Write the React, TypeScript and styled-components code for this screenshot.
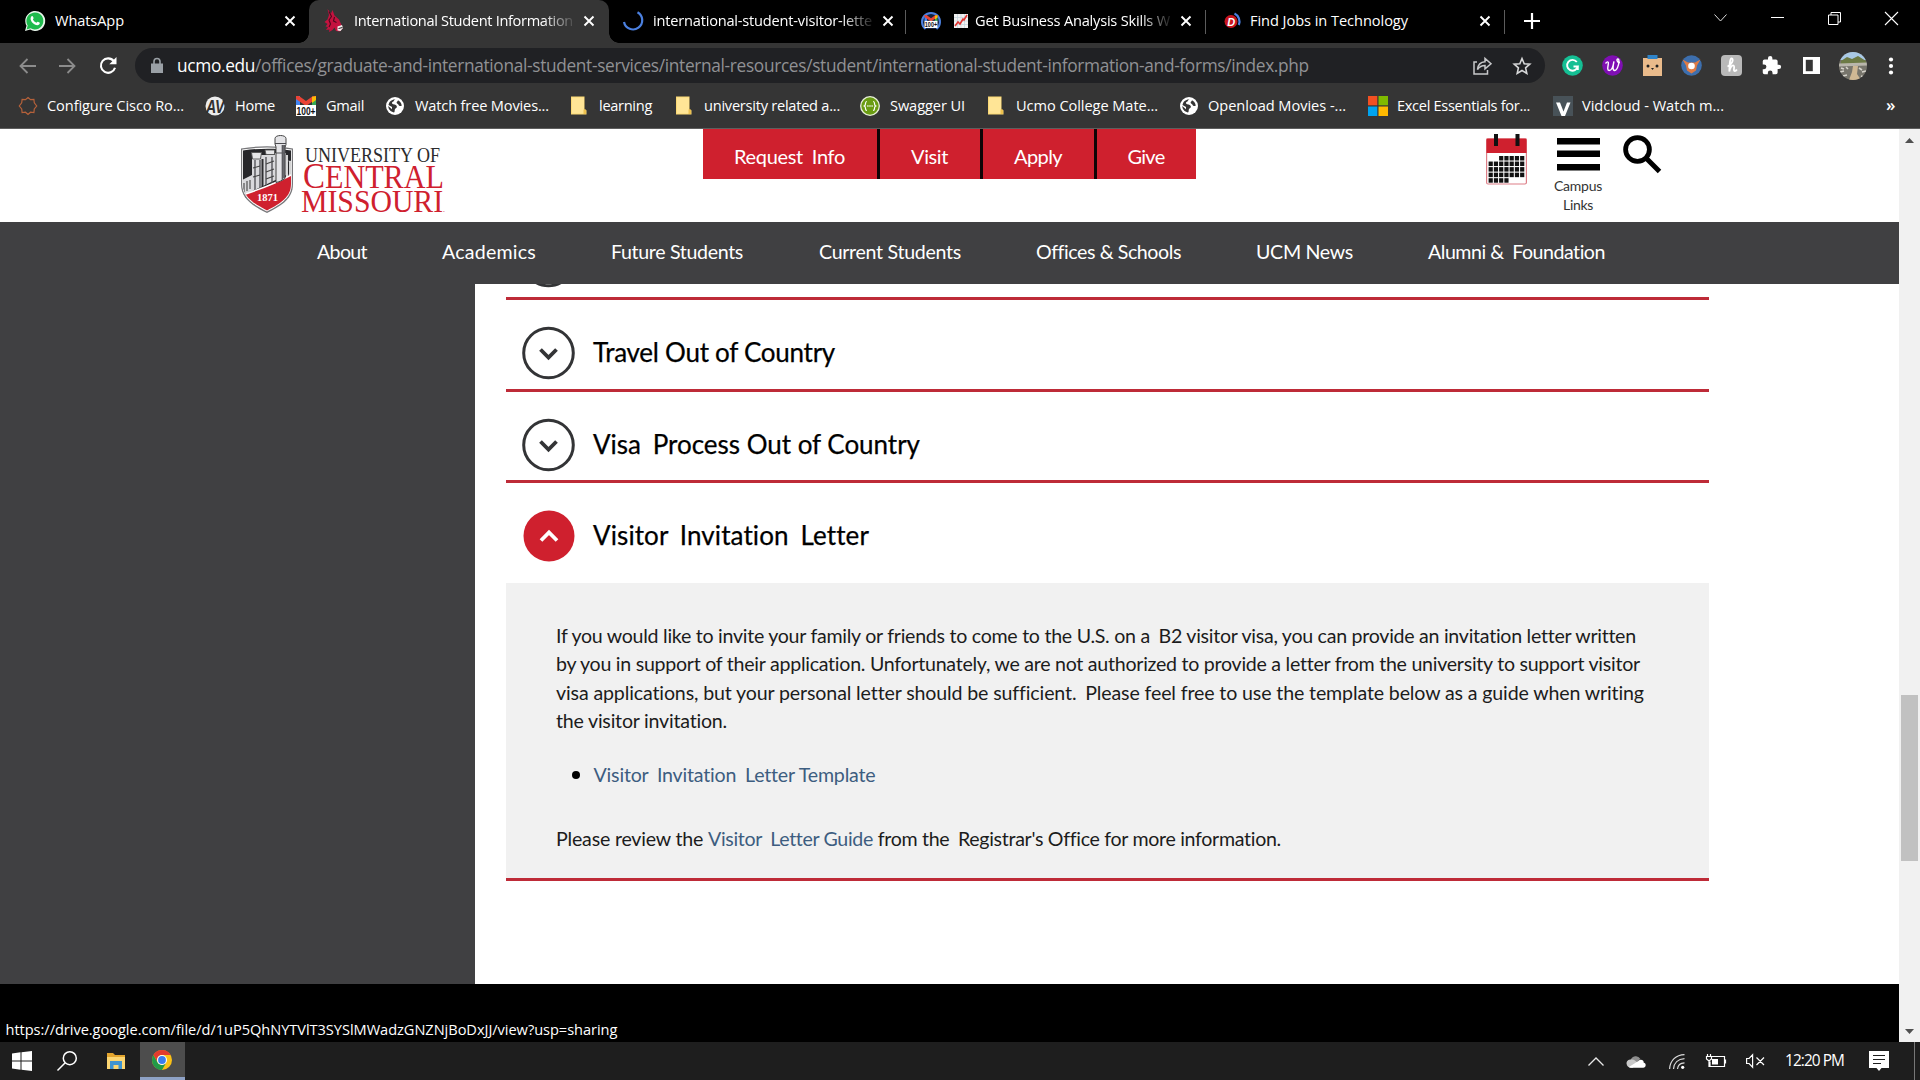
import React, { useLayoutEffect, useRef, useState } from "react";
import styled, { createGlobalStyle } from "styled-components";

const UI = `"Open Sans", "Noto Sans", sans-serif`;
const SITE = `Lato, "Open Sans", sans-serif`;
const RED = "#cf202e";

const Global = createGlobalStyle`
  * { box-sizing: border-box; }
  body { margin: 0; background: #000; overflow: hidden; }
  svg { display: block; flex: none; overflow: visible; }
`;

/* ---------- text tracked out to a fixed measure ---------- */
const Tracked = styled.span`
  display: inline-block;
  flex: none;
  white-space: pre;
`;
const WideSpace = styled.span`
  padding-right: 0.2em;
`;

/* A "~" in the text stands for a word space that is set wider than the rest. */
function Fit({ w, children }: { w: number; children: React.ReactNode }) {
  const ref = useRef<HTMLSpanElement>(null);
  const [spacing, setSpacing] = useState(0.001);
  useLayoutEffect(() => {
    const el = ref.current;
    if (!el) return;
    el.style.letterSpacing = "0.001px";
    const natural = el.getBoundingClientRect().width;
    const next = (w - natural) / (el.textContent || " ").length;
    el.style.letterSpacing = `${next}px`;
    setSpacing(next);
  }, [w]);
  const content =
    typeof children === "string"
      ? children.split("~").map((part, i) => (
          <React.Fragment key={i}>
            {i > 0 && <WideSpace> </WideSpace>}
            {part}
          </React.Fragment>
        ))
      : children;
  return (
    <Tracked ref={ref} style={{ letterSpacing: `${spacing}px` }}>
      {content}
    </Tracked>
  );
}

/* ---------- window ---------- */
const Screen = styled.div`
  width: 1920px;
  height: 1080px;
  display: flex;
  flex-direction: column;
  overflow: hidden;
  font-family: ${UI};
  color: #fff;
`;

const TabStrip = styled.div`
  height: 43px;
  flex: none;
  display: flex;
  background: #000;
`;
const Tab = styled.div<{ $w: number; $active?: boolean; $pad: number; $line?: boolean }>`
  position: relative;
  width: ${(p) => p.$w}px;
  height: 43px;
  padding: 0 0 1px ${(p) => p.$pad}px;
  display: flex;
  align-items: center;
  font-size: 14.6px;
  line-height: 20px;
  background: ${(p) => (p.$active ? "#353535" : "transparent")};
  border-radius: ${(p) => (p.$active ? "10px 10px 0 0" : "0")};
  &::after {
    content: "";
    position: absolute;
    right: 0;
    top: 10px;
    width: 1px;
    height: 24px;
    background: ${(p) => (p.$line ? "#5c5c5c" : "transparent")};
  }
`;
const Foot = styled.i<{ $side: "left" | "right" }>`
  position: absolute;
  bottom: 0;
  ${(p) => p.$side}: -10px;
  width: 10px;
  height: 10px;
  background: radial-gradient(
    circle at ${(p) => (p.$side === "left" ? "0 0" : "100% 0")},
    transparent 9.5px,
    #353535 10px
  );
`;
const TabIcon = styled.div<{ $w: number }>`
  width: ${(p) => p.$w}px;
  flex: none;
  display: flex;
  align-items: center;
`;
const TabTitle = styled.div<{ $w: number; $fade?: boolean }>`
  width: ${(p) => p.$w}px;
  flex: none;
  overflow: hidden;
  height: 22px;
  ${(p) => p.$fade && `mask-image: linear-gradient(90deg, #000 ${p.$w - 40}px, transparent ${p.$w - 6}px);`}
`;
const WindowControls = styled.div`
  margin-left: auto;
  display: flex;
  height: 36px;
  align-items: center;
  & > div { width: 57px; display: flex; justify-content: center; }
`;

const Toolbar = styled.div`
  height: 45px;
  flex: none;
  display: flex;
  align-items: center;
  background: #353535;
  padding-left: 19px;
`;
const NavSlot = styled.div<{ $w: number }>`
  width: ${(p) => p.$w}px;
  flex: none;
`;
const Address = styled.div`
  width: 1410px;
  height: 35px;
  flex: none;
  border-radius: 18px;
  background: #202124;
  display: flex;
  align-items: center;
  padding-left: 16px;
  font-size: 17.3px;
  line-height: 24px;
  color: #909194;
  & b { font-weight: 400; color: #fff; }
`;
const AddressText = styled.div`
  width: 1296px;
  margin-left: 14px;
  flex: none;
`;
const Extensions = styled.div`
  display: flex;
  align-items: center;
  padding-left: 17px;
  & > * { margin-right: 18.8px; }
  & > *:nth-last-child(2) { margin-left: -2px; }
`;

const Bookmarks = styled.div`
  height: 41px;
  flex: none;
  display: flex;
  align-items: center;
  background: #353535;
  border-bottom: 1px solid #5e5e5e;
  padding: 0 0 5px 18px;
  font-size: 14.6px;
  line-height: 20px;
`;
const Bookmark = styled.div<{ $w: number }>`
  width: ${(p) => p.$w}px;
  flex: none;
  display: flex;
  align-items: center;
`;
const BookmarkIcon = styled.div<{ $w: number }>`
  width: ${(p) => p.$w}px;
  flex: none;
`;
const BookmarkText = styled.div`
  padding-bottom: 1px;
`;
const More = styled.div`
  margin-left: auto;
  width: 34px;
  padding-bottom: 2px;
  font-size: 17px;
  font-weight: 600;
`;

/* ---------- site ---------- */
const Viewport = styled.div`
  height: 913px;
  flex: none;
  display: flex;
`;
const Page = styled.div`
  position: relative;
  width: 1899px;
  display: flex;
  flex-direction: column;
  background: #000;
  font-family: ${SITE};
`;
const SiteHeader = styled.header`
  height: 93px;
  flex: none;
  display: flex;
  align-items: flex-start;
  background: #fff;
  padding-left: 241px;
`;
const LogoBox = styled.div`
  width: 462px;
  padding-top: 6px;
`;
const Actions = styled.div`
  display: flex;
  width: 783px;
  gap: 3px;
  & > div { box-shadow: 3px 0 0 #100406; }
  & > div:last-child { box-shadow: none; }
`;
const Action = styled.div<{ $w: number }>`
  width: ${(p) => p.$w}px;
  height: 50px;
  background: ${RED};
  display: flex;
  justify-content: center;
  padding: 13px 1px 0 0;
  font-size: 20px;
  line-height: 28px;
`;
const CalendarBox = styled.div`
  width: 62px;
  padding-top: 5px;
`;
const Campus = styled.div`
  width: 60px;
  padding-top: 9px;
  display: flex;
  flex-direction: column;
  align-items: center;
  color: #333;
  font-size: 14px;
  line-height: 19px;
  svg { margin-bottom: 5px; }
`;
const SearchBox = styled.div`
  padding: 6px 0 0 15px;
`;
const SiteNav = styled.nav`
  height: 62px;
  flex: none;
  display: flex;
  background: #404042;
  padding: 16px 0 0 317px;
  font-size: 19.6px;
  line-height: 28px;
`;
const NavItem = styled.div<{ $w: number }>`
  width: ${(p) => p.$w}px;
  flex: none;
`;
const Body = styled.div`
  height: 700px;
  flex: none;
  display: flex;
  background: #404042;
`;
const Side = styled.aside`
  width: 475px;
  flex: none;
`;
const Main = styled.main`
  flex: 1;
  background: #fff;
  padding: 0 190px 0 31px;
  overflow: hidden;
`;
const Row = styled.div<{ $h: number; $below?: number; $open?: boolean }>`
  height: ${(p) => p.$h}px;
  display: flex;
  align-items: flex-end;
  padding: 0 0 ${(p) => p.$below ?? 10}px 16px;
  border-bottom: ${(p) => (p.$open ? "0" : "3px solid #be2b38")};
  color: #000;
  font-size: 26px;
  line-height: 52px;
  -webkit-text-stroke: 0.25px #000;
`;
const Title = styled.div`
  padding-bottom: 1px;
`;
const Chevron = styled.div`
  width: 71px;
  flex: none;
`;
const Panel = styled.section`
  height: 298px;
  background: #f1f1f1;
  border-bottom: 3px solid #be2b38;
  padding: 39px 0 0 50px;
  color: #1c1c1c;
  font-size: 19.6px;
  line-height: 28.4px;
`;
const Line = styled.div`
  height: 28.4px;
`;
const Item = styled.div`
  display: flex;
  align-items: center;
  margin: 25.5px 0 36px;
  padding-left: 16px;
`;
const Bullet = styled.i`
  width: 8px;
  height: 8px;
  border-radius: 50%;
  background: #000;
  margin-right: 13.5px;
`;
const Link = styled.a`
  color: #3d5d80;
`;
const Status = styled.div`
  position: absolute;
  left: 5.5px;
  bottom: 2px;
  font-family: ${UI};
  font-size: 14.6px;
  line-height: 22px;
`;
const Scrollbar = styled.div`
  width: 21px;
  background: #f1f1f1;
  display: flex;
  flex-direction: column;
  align-items: center;
  padding-top: 9px;
`;
const Thumb = styled.div`
  width: 17px;
  height: 166px;
  margin: 552px 0 168px;
  background: #c1c1c1;
`;

/* ---------- taskbar ---------- */
const Taskbar = styled.div`
  height: 38px;
  flex: none;
  display: flex;
  background: #1e1e1e;
`;
const Slot = styled.div<{ $w: number; $pad?: number; $on?: boolean }>`
  width: ${(p) => p.$w}px;
  padding-left: ${(p) => p.$pad || 0}px;
  height: 38px;
  flex: none;
  display: flex;
  align-items: center;
  font-size: 15.4px;
  line-height: 20px;
  background: ${(p) => (p.$on ? "#4d4d4d" : "transparent")};
  border-bottom: ${(p) => (p.$on ? "3px solid #8ea2c6" : "0")};
`;
const Tray = styled.div`
  margin-left: auto;
  width: 332px;
  display: flex;
`;

/* ---------- drawings ---------- */
const Close = () => (
  <svg width="12" height="12" viewBox="0 0 12 12" stroke="#fff" strokeWidth="1.9">
    <path d="M1.5 1.5l9 9M10.5 1.5l-9 9" />
  </svg>
);
const WhatsApp = () => (
  <svg width="20" height="20" viewBox="0 0 20 20">
    <path d="M0 20l1.5-5.2A10 10 0 1 1 5.2 18.6z" fill="#e9f7ec" />
    <path d="M1.6 18.4l1.1-3.9a8.5 8.5 0 1 1 2.9 2.8z" fill="#1fbb4d" />
    <path d="M6.6 5.3c.5-.5 1-.4 1.3.2l.7 1.6c.1.6-.7 1-.7 1.5.8 1.5 1.9 2.5 3.4 3.1.5.1.9-1.2 1.5-1l1.7.9c.6.4.2 1.5-.4 2-2 1.4-4.9-.2-6.4-1.7C6 10.2 4.6 7.3 6.6 5.3z" fill="#fff" />
  </svg>
);
const Mule = () => (
  <svg width="20" height="24" viewBox="0 0 20 24">
    <path d="M3.5 0l3.500 4.500L8.500 1l2 5.500 4.500 4 2.500 5.500 1 3.500-2.500 3-4-.5-1.500-3.500-2 2.500-3.500 2 .5-2.500-3.500.5 2-3-2.500-.5 2-2.500L.5 13l3-2.500L5 6z" fill="#c4123f" />
    <path d="M5 2.500l2.500 5L5 11l1.500 4-1.500 3M10.500 8l-1 4 3 1.500" stroke="#4a0a1c" strokeWidth="1.1" fill="none" />
    <path d="M13.500 17.500l4.500-1.500 1 3-2.500 3-3-.5z" fill="#f5eeee" />
    <path d="M14.500 19.500l4-1" stroke="#222" />
  </svg>
);
const Spinner = () => (
  <svg width="20" height="20" viewBox="0 0 20 20" fill="none" stroke="#4b80e0" strokeWidth="2.2">
    <path d="M14.5 1.200A9.200 9.200 0 1 1 1 11" />
  </svg>
);
const HundredMail = ({ ring }: { ring?: boolean }) => (
  <svg width="20" height="20" viewBox="0 0 20 20">
    {ring && <path d="M4.500 18A9 9 0 1 1 15.500 18" fill="#14213c" stroke="#4b80e0" strokeWidth="2" />}
    <g transform={ring ? "translate(3.500 4) scale(.65)" : undefined}>
      <path d="M0 0h4v10H0z" fill="#4285f4" />
      <path d="M16 0h4v10h-4z" fill="#34a853" />
      <path d="M0 0h3l7 5 7-5h3v3L10 10 0 3z" fill="#ea4335" />
      <path d="M16 1l4-1v4l-4 3z" fill="#fbbc04" />
      <path d="M0 9h20v11H0z" fill="#fff" />
      <text x="0.5" y="18.8" fontSize="11" fontWeight="700" fontFamily="Liberation Sans" textLength="19" lengthAdjust="spacingAndGlyphs" fill="#111">100+</text>
    </g>
  </svg>
);
const ChartMark = () => (
  <svg width="14" height="14" viewBox="0 0 14 14">
    <path d="M0 0h14v14H0z" fill="#f2f2f2" />
    <path d="M0 3.500h14M0 7h14M0 10.500h14M3.500 0v14M7 0v14M10.500 0v14" stroke="#c3d2dc" strokeWidth=".7" />
    <path d="M1 12l3-4 2 2 3-5 1 1 3-5" fill="none" stroke="#e0322f" strokeWidth="1.6" />
  </svg>
);
const Dice = () => (
  <svg width="18" height="20" viewBox="0 0 18 20">
    <circle cx="7" cy="10.5" r="6.5" fill="#c8141d" />
    <text x="3.2" y="14.5" fontSize="11" fontWeight="900" fontStyle="italic" fontFamily="Liberation Sans" fill="#fff">D</text>
    <path d="M10.500 2.500A9 9 0 0 1 14.800 14" fill="none" stroke="#4b80e0" strokeWidth="2.2" />
  </svg>
);
const Folder = () => (
  <svg width="16" height="19" viewBox="0 0 16 19">
    <path d="M0 .5h13.500v13l2 .8v4.200H0z" fill="#fbd975" />
    <path d="M1 1.500h12v16H1z" fill="#ffe596" />
    <path d="M12.500 13.500h2.500v4.500h-2.500z" fill="#edc14f" />
  </svg>
);
const Globe = () => (
  <svg width="18" height="18" viewBox="0 0 18 18">
    <circle cx="9" cy="9" r="9" fill="#fff" />
    <path d="M9.500 2.500c-2 .5-1.200 2-3 2.500-1 .6-.5 2 .6 2.200 2 .2 3.900.7 3.800 2.500 0 1.500-2.200 1.500-2.200 3.200 0 1.300-.2 2.500-.8 2.600C4.500 14.700 2.200 12 2.300 9l3.700 3.300V10L2.500 8C3 4.500 6 2.100 9.500 2.500zM12 3.200c2.200 1.200 3.600 3.200 3.700 5.500-1 .8-2.900.300-3.200-.9-.2-.9-1.900-.8-1.900-2.300 0-.9 1.200-1 1.400-2.300z" fill="#353535" />
  </svg>
);
const Sun = () => (
  <svg width="20" height="20" viewBox="0 0 20 20" fill="none" stroke="#b5613a" strokeWidth="1.2">
    <path d="M10 1.500l2.500 2.200 3.400-.3.400 3.400L18.700 10l-2.400 3 -.4 3.500-3.400-.3L10 18.500l-2.500-2.300-3.400.3-.4-3.500L1.300 10l2.400-3.200.4-3.400 3.400.3z" />
  </svg>
);
const AV = () => (
  <svg width="20" height="20" viewBox="0 0 20 20">
    <circle cx="10" cy="10" r="9.5" fill="#ececec" />
    <text x="1" y="17" fontSize="18" fontWeight="700" fontStyle="italic" fontFamily="Liberation Sans" textLength="18.5" lengthAdjust="spacingAndGlyphs" fill="#303030">AV</text>
  </svg>
);
const Swagger = () => (
  <svg width="20" height="20" viewBox="0 0 20 20">
    <circle cx="10" cy="10" r="9.3" fill="#6a9c12" stroke="#e8f0d8" strokeWidth="1.3" />
    <path d="M7 5.500c-1.500 0-1.500.8-1.500 2s0 2-1.200 2.500C5.500 10.500 5.500 11.500 5.500 12.500s0 2 1.500 2M13 5.500c1.500 0 1.500.8 1.500 2s0 2 1.200 2.500c-1.200.5-1.200 1.500-1.200 2.500s0 2-1.500 2" fill="none" stroke="#fff" strokeWidth="1.2" />
    <path d="M7.300 10h1.200M9.400 10h1.200M11.500 10h1.200" stroke="#fff" strokeWidth="1.3" />
  </svg>
);
const Squares = () => (
  <svg width="20" height="20" viewBox="0 0 20 20">
    <path d="M0 0h9.300v9.300H0z" fill="#f25022" />
    <path d="M10.500 0H20v9.300h-9.500z" fill="#7fba00" />
    <path d="M0 10.500h9.300V20H0z" fill="#00a4ef" />
    <path d="M10.500 10.500H20V20h-9.500z" fill="#ffb900" />
  </svg>
);
const Vid = () => (
  <svg width="20" height="20" viewBox="0 0 20 20">
    <path d="M0 0h20v20H0z" fill="#485258" />
    <path d="M3 6.500h4l3.500 9L14 6.500h3.500L12 20H8.500z" fill="#fff" />
  </svg>
);
const Arrow = ({ flip }: { flip?: boolean }) => (
  <svg width="17" height="16" viewBox="0 0 17 16" fill="none" stroke="#8c8c8c" strokeWidth="1.8">
    <path d={flip ? "M0 8h15.500M8.500 1l7 7-7 7" : "M17 8H1.500M8.500 1l-7 7 7 7"} />
  </svg>
);
const Reload = () => (
  <svg width="18" height="18" viewBox="0 0 18 18" fill="none" stroke="#fff" strokeWidth="2.1">
    <path d="M14.800 4.200A7.200 7.200 0 1 0 16 10.700" />
    <path d="M17.500 0v7.200h-7.200z" fill="#fff" stroke="none" />
  </svg>
);
const Lock = () => (
  <svg width="12" height="15" viewBox="0 0 12 15">
    <path d="M0 5.500h12V15H0z" fill="#9aa0a6" />
    <path d="M3 6V3.500a3 3 0 0 1 6 0V6" fill="none" stroke="#9aa0a6" strokeWidth="1.6" />
  </svg>
);
const Share = () => (
  <svg width="19" height="18" viewBox="0 0 19 18" fill="none" stroke="#c6c7c9" strokeWidth="1.5">
    <path d="M4 5H1v12h13.500v-4" />
    <path d="M4.500 12.500C5 7.500 8 5 12 4.800V1.500l6 5.300-6 5V8.500c-3.500 0-5.500 1-7.500 4z" />
  </svg>
);
const Star = () => (
  <svg width="18" height="18" viewBox="0 0 18 18" fill="none" stroke="#d6d7d8" strokeWidth="1.6">
    <path d="M9 1.500l2.200 5.200 5.600.5-4.200 3.700 1.200 5.500L9 13.500l-4.800 2.900 1.200-5.500L1.200 7.200l5.600-.5z" />
  </svg>
);

const ExtensionIcons = () => (
  <Extensions>
    <svg width="21" height="21" viewBox="0 0 21 21">
      <circle cx="10.5" cy="10.5" r="10.3" fill="#15bf94" />
      <path d="M14.800 7A5.400 5.400 0 1 0 15.800 11.500H11.500M15.800 11v4" fill="none" stroke="#fff" strokeWidth="1.9" />
    </svg>
    <svg width="21" height="21" viewBox="0 0 21 21">
      <circle cx="10.5" cy="10.5" r="10.3" fill="#7f0fb3" />
      <path d="M3.500 8.500c2-2.500 3.300-2 2.800.5-.5 3-1.300 6.500.8 6.500 2.400 0 4.200-5 4.800-9-.8 4-1.700 9 .8 9 3 0 5.800-11 3.300-11.500-1.800-.3-1.200 4 2 3.500" fill="none" stroke="#fff" strokeWidth="1.4" />
    </svg>
    <svg width="21" height="21" viewBox="0 0 21 21">
      <path d="M1 3h19v18H1z" fill="#eabb8b" />
      <path d="M5.500 0h10v4h-10z" fill="#2f84c9" />
      <circle cx="6" cy="11" r="1.5" fill="#222" />
      <circle cx="15" cy="11" r="1.5" fill="#222" />
      <path d="M9 13h3l-1.500 2z" fill="#222" />
    </svg>
    <svg width="21" height="21" viewBox="0 0 21 21">
      <circle cx="10.5" cy="10.5" r="10.3" fill="#3d6fae" />
      <path d="M1.500 4.500l5.500 3h7l5.500-3-3.500 6-1 5-4.500 3-4.500-3-1-5z" fill="#df7b45" />
      <circle cx="10.5" cy="11" r="3.3" fill="#fff" />
    </svg>
    <svg width="21" height="21" viewBox="0 0 21 21">
      <rect width="21" height="21" rx="4" fill="#b9b9b9" />
      <path d="M6.500 11.500c4.500-1.500 6.500-7.500 4.300-8-2.300-.5-2.300 9-2.500 13 .7-4 2.700-6.500 4.200-6 1.800.6-.8 5.500 1.200 5.500 1 0 1.700-.7 2.200-1.500" fill="none" stroke="#fff" strokeWidth="1.8" />
    </svg>
    <svg width="21" height="21" viewBox="0 0 24 24">
      <path d="M20.500 11H19V7a2 2 0 0 0-2-2h-4V3.500a2.500 2.500 0 0 0-5 0V5H4a2 2 0 0 0-2 2v3.800h1.500a2.700 2.700 0 0 1 0 5.400H2V20a2 2 0 0 0 2 2h3.800v-1.500a2.700 2.700 0 0 1 5.400 0V22H17a2 2 0 0 0 2-2v-4h1.500a2.500 2.500 0 0 0 0-5z" fill="#fff" />
    </svg>
    <svg width="21" height="19" viewBox="0 0 21 19">
      <path d="M2 1h17v17H2z" fill="#fff" />
      <path d="M4.800 3.800h7v11.400h-7z" fill="#353535" />
    </svg>
    <svg width="28" height="28" viewBox="0 0 28 28">
      <defs>
        <clipPath id="face"><circle cx="14" cy="14" r="14" /></clipPath>
      </defs>
      <g clipPath="url(#face)">
        <path d="M0 0h28v28H0z" fill="#77756c" />
        <path d="M0 0h28v8H0z" fill="#a9c9e6" />
        <path d="M2 9l6-4 5 2 6-3 8 5v3H2z" fill="#6c7a45" />
        <path d="M0 11.500l28-1v3l-28 1z" fill="#b9b6ac" />
        <path d="M10 28l3-8 1-6h5l-1 8 4 6z" fill="#cfb894" />
        <path d="M2 16l3 1M7 15l2 2M1 20l4-1M20 16l3 2M23 20l4-1M4 24l4-1M22 24l3 1" stroke="#d6d3cb" strokeWidth="1.6" />
      </g>
    </svg>
    <svg width="12" height="18" viewBox="0 0 12 18" fill="#fff">
      <circle cx="6" cy="2.5" r="2.1" /><circle cx="6" cy="9" r="2.1" /><circle cx="6" cy="15.5" r="2.1" />
    </svg>
  </Extensions>
);

const Logo = () => (
  <svg width="206" height="80" viewBox="0 0 206 80">
    <defs>
      <clipPath id="shield"><path d="M2 15.500c17-2.500 33-2.500 48 0V49c0 13-10 19-24 26.500C12 68 2 62 2 49z" /></clipPath>
    </defs>
    <path d="M0 13.500c17-3 35-3 52 0V49c0 14-10 21-26 29C10 70 0 63 0 49z" fill="#77777a" />
    <path d="M1.200 14.600c17-2.800 33-2.800 49.600 0V49c0 13-10 20-24.800 27.500C11 69 1.200 62 1.200 49z" fill="#fff" />
    <g clipPath="url(#shield)">
      <path d="M0 10h52v30L0 62z" fill="#27272a" />
      <path d="M1 45l10-5V24h9v-4h14v-2h11v22L3 60z" fill="#d9d9dc" />
      <path d="M14 25v30M19 25v28M25 22v28M31 22v26M46 26h6v14h-6z" stroke="#55555a" strokeWidth="1.4" fill="none" />
      <path d="M21.500 24v28" stroke="#2c2c2f" strokeWidth="2" />
      <path d="M46 20v24M49 26v17" stroke="#fff" strokeWidth="1.6" />
      <path d="M3 48v9M6 46v10M9 45v9M25 29l8-3M25 37l8-3M25 44l8-3M12 33l7-2M12 42l7-2" stroke="#444" strokeWidth="1.1" />
      <path d="M0 60.500C20 54 36 48 52 39v40H0z" fill={RED} />
      <path d="M0 60.500C20 54 36 48 52 39" fill="none" stroke="#fff" strokeWidth="1.5" />
    </g>
    <path d="M34 3.500c0-4 11-4 11 0v6l-1 3v31c-3 2-6 3.500-9 4V12l-1-3z" fill="#e4e4e7" stroke="#444" strokeWidth="1" />
    <path d="M34 8.500h11M35 18h9" stroke="#4b4b4f" strokeWidth="1.2" fill="none" />
    <path d="M41.500 10v35M43.300 10v33" stroke="#5a5a5e" strokeWidth="1.7" />
    <path d="M10.500 17.500h10l-1 6.500h-8zM24 15h9.500v4.500H25z" fill="#e6e6e8" stroke="#555" strokeWidth=".9" />
    <text x="16" y="66" fontFamily="Liberation Serif" fontWeight="700" fontSize="11" fill="#fff" textLength="21" lengthAdjust="spacingAndGlyphs">1871</text>
    <g fontFamily="Liberation Serif">
      <text x="64" y="27" fontSize="20" fill="#2b2b2d" textLength="135" lengthAdjust="spacingAndGlyphs">UNIVERSITY OF</text>
      <text x="62" y="52.5" fontSize="33" fill={RED} textLength="141" lengthAdjust="spacingAndGlyphs"><tspan fontSize="36">C</tspan>ENTRAL</text>
      <text x="60" y="76.5" fontSize="31.5" fill={RED} textLength="144" lengthAdjust="spacingAndGlyphs">MISSOURI<tspan fontSize="8">.</tspan></text>
    </g>
  </svg>
);

const Calendar = () => {
  const cells: React.ReactNode[] = [];
  for (let r = 0; r < 5; r++)
    for (let c = 0; c < 7; c++) {
      if ((r === 0 && c < 2) || (r === 4 && c > 3)) continue;
      cells.push(<rect key={`${r}-${c}`} x={2.6 + c * 5.25} y={22 + r * 5.55} width="4.2" height="4.5" fill="#111" />);
    }
  return (
    <svg width="41" height="51" viewBox="0 0 41 51">
      <rect x=".6" y="5" width="39.8" height="45" rx="1.5" fill="#fff" stroke="#dd7f87" strokeWidth="1.2" />
      <path d="M.5 4.500h40V19H.5z" fill={RED} />
      <path d="M8 0h4v12H8zM29.500 0h4v12h-4z" fill="#111" />
      {cells}
    </svg>
  );
};

const RowIcon = ({ open }: { open?: boolean }) => (
  <svg width="53" height="52" viewBox="0 0 53 52" fill="none">
    {open ? <circle cx="27" cy="26" r="25.5" fill={RED} /> : <circle cx="26.5" cy="26" r="24.8" stroke="#333436" strokeWidth="3" />}
    <path d={open ? "M19 30.500l8-8 8 8" : "M18.500 22.500l8 8 8-8"} stroke={open ? "#fff" : "#333436"} strokeWidth="3.8" />
  </svg>
);

const Chrome = () => (
  <svg width="20" height="20" viewBox="0 0 20 20">
    <circle cx="10" cy="10" r="10" fill="#fbc116" />
    <path d="M1.340 5A10 10 0 0 1 18.660 5H10a5 5 0 0 0-4.330 7.500z" fill="#e33b2e" />
    <path d="M1.340 5A10 10 0 0 0 10 20l4.330-7.500a5 5 0 0 1-8.660 0z" fill="#229a48" />
    <circle cx="10" cy="10" r="5" fill="#fff" />
    <circle cx="10" cy="10" r="3.9" fill="#3b7ded" />
  </svg>
);

const bookmarks: [React.ReactNode, string, number, number, number][] = [
  [<Sun />, "Configure Cisco Ro...", 29, 137, 187],
  [<AV />, "Home", 30, 40, 91],
  [<HundredMail />, "Gmail", 30, 38, 90],
  [<Globe />, "Watch free Movies...", 29, 134, 185],
  [<Folder />, "learning", 28, 53, 105],
  [<Folder />, "university related a...", 28, 136, 184],
  [<Swagger />, "Swagger UI", 30, 75, 128],
  [<Folder />, "Ucmo College Mate...", 28, 142, 192],
  [<Globe />, "Openload Movies -...", 28, 138, 188],
  [<Squares />, "Excel Essentials for...", 29, 133, 185],
  [<Vid />, "Vidcloud - Watch m...", 29, 142, 180],
];

const nav: [string, number, number][] = [
  ["About", 50, 125],
  ["Academics", 94, 169],
  ["Future Students", 132, 208],
  ["Current Students", 142, 217],
  ["Offices & Schools", 145, 220],
  ["UCM News", 97, 172],
  ["Alumni &~Foundation", 177, 190],
];

const actions: [string, number, number][] = [
  ["Request~Info", 111, 174],
  ["Visit", 37, 100],
  ["Apply", 48, 111],
  ["Give", 37, 99],
];

export default function App() {
  return (
    <Screen>
      <Global />
      <TabStrip>
        <Tab $w={309} $pad={25}>
          <TabIcon $w={30}><WhatsApp /></TabIcon>
          <TabTitle $w={229}><Fit w={69}>WhatsApp</Fit></TabTitle>
          <Close />
        </Tab>
        <Tab $w={300} $pad={15} $active>
          <Foot $side="left" /><Foot $side="right" />
          <TabIcon $w={30}><Mule /></TabIcon>
          <TabTitle $w={229} $fade><Fit w={219}>International Student Information</Fit></TabTitle>
          <Close />
        </Tab>
        <Tab $w={297} $pad={14} $line>
          <TabIcon $w={30}><Spinner /></TabIcon>
          <TabTitle $w={229} $fade><Fit w={219}>international-student-visitor-lette</Fit></TabTitle>
          <Close />
        </Tab>
        <Tab $w={300} $pad={15} $line>
          <TabIcon $w={33}><HundredMail ring /></TabIcon>
          <TabIcon $w={21}><ChartMark /></TabIcon>
          <TabTitle $w={205} $fade><Fit w={195}>Get Business Analysis Skills W</Fit></TabTitle>
          <Close />
        </Tab>
        <Tab $w={299} $pad={18} $line>
          <TabIcon $w={26}><Dice /></TabIcon>
          <TabTitle $w={229}><Fit w={158}>Find Jobs in Technology</Fit></TabTitle>
          <Close />
        </Tab>
        <Tab $w={50} $pad={19}>
          <svg width="16" height="16" viewBox="0 0 16 16" stroke="#fff" strokeWidth="2.2"><path d="M8 0v16M0 8h16" /></svg>
        </Tab>
        <WindowControls>
          <div><svg width="13" height="8" viewBox="0 0 13 8" fill="none" stroke="#ddd"><path d="M.5.5l6 6.500 6-6.500" /></svg></div>
          <div><svg width="13" height="2" viewBox="0 0 13 2"><path d="M0 0h13v1H0z" fill="#fff" /></svg></div>
          <div><svg width="13" height="13" viewBox="0 0 13 13" fill="none" stroke="#fff"><path d="M.5 3h9.500v9.500H.5zM3 3V.5h9.500V10H10" /></svg></div>
          <div><svg width="13" height="13" viewBox="0 0 13 13" stroke="#fff" strokeWidth="1.1"><path d="M0 0l13 13M13 0L0 13" /></svg></div>
        </WindowControls>
      </TabStrip>

      <Toolbar>
        <NavSlot $w={40}><Arrow /></NavSlot>
        <NavSlot $w={40}><Arrow flip /></NavSlot>
        <NavSlot $w={36}><Reload /></NavSlot>
        <Address>
          <Lock />
          <AddressText>
            <Fit w={1132}>
              <b>ucmo.edu</b>
              {"/offices/graduate-and-international-student-services/internal-resources/student/international-student-information-and-forms/index.php"}
            </Fit>
          </AddressText>
          <NavSlot $w={40}><Share /></NavSlot>
          <Star />
        </Address>
        <ExtensionIcons />
      </Toolbar>

      <Bookmarks>
        {bookmarks.map(([icon, label, iw, tw, w]) => (
          <Bookmark key={label} $w={w}>
            <BookmarkIcon $w={iw}>{icon}</BookmarkIcon>
            <BookmarkText><Fit w={tw}>{label}</Fit></BookmarkText>
          </Bookmark>
        ))}
        <More>»</More>
      </Bookmarks>

      <Viewport>
        <Page>
          <SiteHeader>
            <LogoBox><Logo /></LogoBox>
            <Actions>
              {actions.map(([label, tw, w]) => (
                <Action key={label} $w={w}><Fit w={tw}>{label}</Fit></Action>
              ))}
            </Actions>
            <CalendarBox><Calendar /></CalendarBox>
            <Campus>
              <svg width="43" height="33" viewBox="0 0 43 33"><path d="M0 0h43v6.500H0zM0 12.500h43V19H0zM0 26h43v6.500H0z" fill="#000" /></svg>
              <Fit w={48}>Campus</Fit>
              <Fit w={30}>Links</Fit>
            </Campus>
            <SearchBox>
              <svg width="39" height="39" viewBox="0 0 39 39" fill="none" stroke="#000">
                <circle cx="14.5" cy="14.5" r="11.9" strokeWidth="4.8" />
                <path d="M23 23l13.500 13.500" strokeWidth="5" />
              </svg>
            </SearchBox>
          </SiteHeader>
          <SiteNav>
            {nav.map(([label, tw, w]) => (
              <NavItem key={label} $w={w}><Fit w={tw}>{label}</Fit></NavItem>
            ))}
          </SiteNav>
          <Body>
            <Side />
            <Main>
              <Row $h={16}><Chevron><RowIcon /></Chevron></Row>
              <Row $h={92}><Chevron><RowIcon /></Chevron><Title><Fit w={242}>Travel Out of Country</Fit></Title></Row>
              <Row $h={91} $below={9}><Chevron><RowIcon /></Chevron><Title><Fit w={327}>Visa~Process Out of Country</Fit></Title></Row>
              <Row $h={100} $below={21} $open><Chevron><RowIcon open /></Chevron><Title><Fit w={276}>Visitor~Invitation~Letter</Fit></Title></Row>
              <Panel>
                <Line><Fit w={1080}>If you would like to invite your family or friends to come to the U.S. on a~B2 visitor visa, you can provide an invitation letter written</Fit></Line>
                <Line><Fit w={1084}>by you in support of their application. Unfortunately, we are not authorized to provide a letter from the university to support visitor</Fit></Line>
                <Line><Fit w={1088}>visa applications, but your personal letter should be sufficient.~Please feel free to use the template below as a guide when writing</Fit></Line>
                <Line><Fit w={171}>the visitor invitation.</Fit></Line>
                <Item><Bullet /><Link><Fit w={282}>Visitor~Invitation~Letter Template</Fit></Link></Item>
                <Line>
                  <Fit w={152}>{"Please review the "}</Fit>
                  <Link><Fit w={165}>Visitor~Letter Guide</Fit></Link>
                  <Fit w={408}>{" from the~Registrar's Office for more information."}</Fit>
                </Line>
              </Panel>
            </Main>
          </Body>
          <Status><Fit w={612}>https://drive.google.com/file/d/1uP5QhNYTVlT3SYSlMWadzGNZNjBoDxJJ/view?usp=sharing</Fit></Status>
        </Page>
        <Scrollbar>
          <svg width="9" height="5" viewBox="0 0 9 5"><path d="M0 5l4.500-5L9 5z" fill="#505050" /></svg>
          <Thumb />
          <svg width="9" height="5" viewBox="0 0 9 5"><path d="M0 0l4.500 5L9 0z" fill="#505050" /></svg>
        </Scrollbar>
      </Viewport>

      <Taskbar>
        <Slot $w={45} $pad={12}>
          <svg width="20" height="20" viewBox="0 0 20 20" fill="#fff"><path d="M0 2.500L8.500 1.300V9.500H0zM9.500 1.200L20 0v9.500H9.500zM0 10.500h8.500v8.200L0 17.500zM9.500 10.500H20V20L9.500 18.800z" /></svg>
        </Slot>
        <Slot $w={50} $pad={12}>
          <svg width="20" height="20" viewBox="0 0 20 20" fill="none" stroke="#fff" strokeWidth="1.5"><circle cx="12.8" cy="7.2" r="6.5" /><path d="M8.200 11.800L.5 19.500" /></svg>
        </Slot>
        <Slot $w={45} $pad={12}>
          <svg width="18" height="16" viewBox="0 0 18 16">
            <path d="M0 0h6l2 2h10v14H0z" fill="#e3a52e" />
            <path d="M0 4h18v12H0z" fill="#fcd672" />
            <path d="M3 16V8h12v8h-3.500v-4h-5v4z" fill="#3f94d1" />
          </svg>
        </Slot>
        <Slot $w={45} $pad={12} $on><Chrome /></Slot>
        <Tray>
          <Slot $w={38}><svg width="16" height="9" viewBox="0 0 16 9" fill="none" stroke="#e8e8e8" strokeWidth="1.3"><path d="M.5 8.500L8 1l7.500 7.500" /></svg></Slot>
          <Slot $w={43}>
            <svg width="20" height="13" viewBox="0 0 21 13">
              <path d="M5 5a5.500 5.500 0 0 1 10-1.500L10 9H1z" fill="#8d8d8d" />
              <path d="M1 10.500A4 4 0 0 1 5 4.500c3-.8 5 1 7 3l-5 5.500H4a4 4 0 0 1-3-2.500z" fill="#c9c9c9" />
              <path d="M3 12.300L13 6c2-2.500 6-1 5.500 1.500 3 .6 3 5.300-.5 5.500H5z" fill="#fff" />
            </svg>
          </Slot>
          <Slot $w={37}>
            <svg width="16" height="15" viewBox="0 0 16 15" fill="none" stroke="#dcdcdc" strokeWidth="1.2">
              <path d="M.6 15C1 6.500 7 .8 15.500.6M4.500 15c.4-6 4.500-10 11-10.300M8.500 15c.3-3.500 3-6 7-6.200" />
              <circle cx="13.7" cy="13.3" r="1.6" fill="#fff" stroke="none" />
            </svg>
          </Slot>
          <Slot $w={40}>
            <svg width="21" height="14" viewBox="0 0 21 14" fill="none" stroke="#fff" strokeWidth="1.2">
              <path d="M6 2.500h12.500v10H4v-5M19.500 5.500v4M1.500 0v2.500M4.500 0v2.500M.5 2.500h5v2.500L3 7 .5 5zM3 7v5.500h2" />
              <path d="M6 5h6v5.500H6z" fill="#fff" stroke="none" />
            </svg>
          </Slot>
          <Slot $w={39}>
            <svg width="19" height="14" viewBox="0 0 19 14" fill="none" stroke="#fff" strokeWidth="1.2"><path d="M.6 4.500h2.500l3.500-3.700v12.400L3.100 9.500H.6zM10.500 3.500l7.500 7.500M18 3.500L10.500 11" /></svg>
          </Slot>
          <Slot $w={84}><Fit w={59}>12:20 PM</Fit></Slot>
          <Slot $w={45}>
            <svg width="20" height="20" viewBox="0 0 20 20"><path d="M0 0h20v17h-7.500L10 20l-2.500-3H0z" fill="#fff" /><path d="M4 4.500h12M4 8.500h12M4 12.500h8" stroke="#1e1e1e" strokeWidth="1.2" /></svg>
          </Slot>
          <svg width="1" height="38" viewBox="0 0 1 38"><path d="M0 0h1v38H0z" fill="#777" /></svg>
        </Tray>
      </Taskbar>
    </Screen>
  );
}
